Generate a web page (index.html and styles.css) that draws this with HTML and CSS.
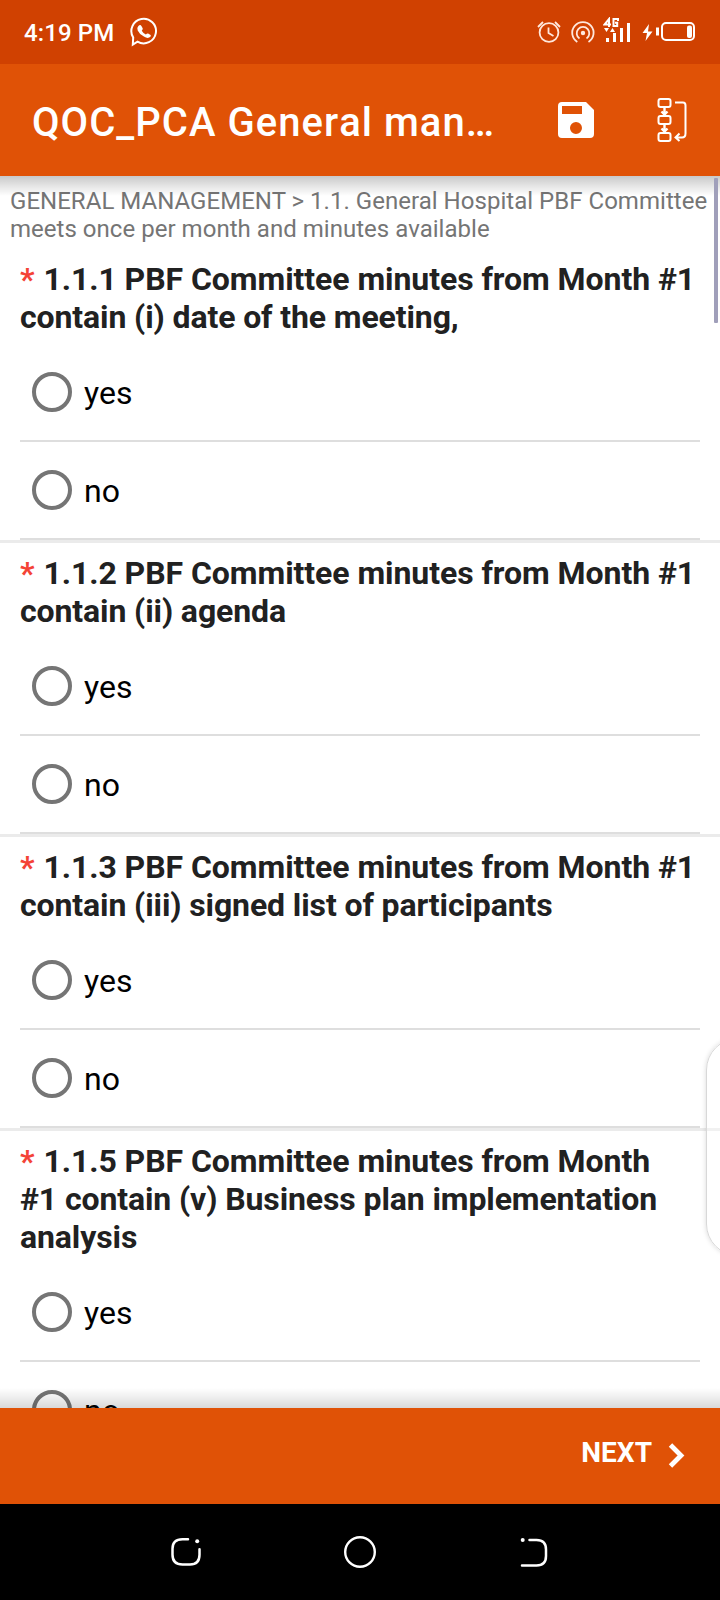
FILE: index.html
```html
<!DOCTYPE html>
<html lang="en">
<head>
<meta charset="utf-8">
<title>QOC_PCA General management</title>
<link rel="stylesheet" href="styles.css">
</head>
<body>
<div class="screen">
  <div class="status">
    <span class="time">4:19 PM</span>
    <svg class="chat" width="28" height="30" viewBox="130 17 28 30" fill="none" stroke="#fff" stroke-width="2"><path d="M133.2 37.5A12.3 12.3 0 1 1 137.500 41.700L132.800 44.600Z"/><path fill="#fff" stroke="none" d="M138.200 26.200q2-2 3.200-.3l1.300 2.400q.4 1-.9 2.400q1.400 2.600 4.100 3.900q1.100-1.500 2.200-1.100l2.500 1.400q.8.800-.5 2.200q-2.300 1.800-6.200-.5q-4.600-2.600-6.200-6.200q-1-2.600.5-4.200Z"/></svg>
    <div class="indicators">
      <svg width="26" height="26" viewBox="536 19 26 26" fill="none" stroke="#ffe7dc" stroke-width="1.800"><circle cx="549" cy="32.500" r="9.400"/><path d="M548.500 27.500v5.500l5 3M538 27l5-5M560 27l-5-5"/></svg>
      <svg width="26" height="26" viewBox="570 19 26 26" fill="none" stroke="#ffe7dc" stroke-width="1.800"><circle cx="583" cy="33" r="1.300" fill="#fff"/><path d="M577.300 41.900A10.700 10.700 0 1 1 588.500 41.900M579.500 38.500A6.300 6.300 0 1 1 586.500 38.500"/></svg>
      <svg class="signal" width="28" height="26" viewBox="603 17 28 26" fill="#fff"><path d="M606 38h3v4h-3zM613 33h3v9h-3zM620 28h3v14h-3zM627 23h3v19h-3zM604 28h5l-2.500 4zM610 32h5l-2.500-4z"/><path fill="none" stroke="#fff" stroke-width="2" d="M609 27V19L604.500 24.500H611M618 21V19H613.500V26H617.200V22.700H615"/></svg>
      <svg class="battery" width="54" height="22" viewBox="642 21 54 22"><path fill="#fff" d="M649 24l-6.500 9h4.500l-1.500 8 7-9.500h-4.500zM656 27.500h3v8h-3z"/><rect x="662" y="23" width="32" height="17" rx="4" fill="none" stroke="#fff" stroke-width="2"/><rect x="687" y="25.500" width="5" height="12.500" rx="2" fill="#fff"/></svg>
    </div>
  </div>
  <header class="appbar">
    <h1 class="title">QOC_PCA General man…</h1>
    <svg class="save" width="36" height="36" viewBox="0 0 36 36"><path fill="#fff" fill-rule="evenodd" d="M4 0H28L36 8V32a4 4 0 0 1-4 4H4a4 4 0 0 1-4-4V4a4 4 0 0 1 4-4ZM4 4V12H24V4ZM18 20a6 6 0 1 0 0 12a6 6 0 0 0 0-12Z"/></svg>
    <svg class="jump" width="32" height="46" viewBox="656 97 32 46" fill="none" stroke="#fff" stroke-width="2"><rect x="658.500" y="99" width="12" height="8" rx="2"/><rect x="658.500" y="116" width="12" height="8" rx="2"/><rect x="658.500" y="133" width="12" height="8" rx="2"/><path d="M664.500 107v7M664.500 124v7M661.500 111.500l3 3 3-3M661.500 128.500l3 3 3-3" stroke-width="2.400"/><path d="M675 102.500h8q2.500 0 2.500 3v28q0 4-3.500 4h-6.500M679.500 133.500l-4 4 4 3.500"/></svg>
  </header>
  <main class="content">
    <p class="crumb">GENERAL MANAGEMENT &gt; 1.1. General Hospital PBF Committee<br>meets once per month and minutes available</p>
    <section class="question">
      <h2 class="label"><span class="star">*</span> 1.1.1 PBF Committee minutes from Month #1<br>contain (i) date of the meeting,</h2>
      <div class="option"><i class="radio"></i><span>yes</span></div>
      <div class="option"><i class="radio"></i><span>no</span></div>
    </section>
    <section class="question">
      <h2 class="label"><span class="star">*</span> 1.1.2 PBF Committee minutes from Month #1<br>contain (ii) agenda</h2>
      <div class="option"><i class="radio"></i><span>yes</span></div>
      <div class="option"><i class="radio"></i><span>no</span></div>
    </section>
    <section class="question">
      <h2 class="label"><span class="star">*</span> 1.1.3 PBF Committee minutes from Month #1<br>contain (iii) signed list of participants</h2>
      <div class="option"><i class="radio"></i><span>yes</span></div>
      <div class="option"><i class="radio"></i><span>no</span></div>
    </section>
    <section class="question">
      <h2 class="label"><span class="star">*</span> 1.1.5 PBF Committee minutes from Month<br>#1 contain (v) Business plan implementation<br>analysis</h2>
      <div class="option"><i class="radio"></i><span>yes</span></div>
      <div class="option"><i class="radio"></i><span>no</span></div>
    </section>
    <div class="shade shade-top"></div>
    <div class="shade shade-bottom"></div>
    <div class="scrollbar"></div>
    <div class="edge-panel"></div>
  </main>
  <footer class="pager">
    <span class="next">NEXT</span>
    <svg class="chevron" width="18" height="26" viewBox="0 0 18 26" fill="none" stroke="#fff" stroke-width="4.800"><path d="M2.500 2 13 12.500 2.500 23"/></svg>
  </footer>
  <nav class="nav">
    <svg width="32" height="30" viewBox="170 1537 32 30" fill="none" stroke="#fff" stroke-width="2.500" stroke-linecap="round"><path d="M188 1539.200h-5.500q-10 0-10 9.500v6q0 9.700 10 9.700h7.500q9.500 0 9.500-9.700v-5.500"/><circle cx="197.200" cy="1541.200" r="2" fill="#fff" stroke="none"/></svg>
    <svg width="34" height="34" viewBox="0 0 34 34"><circle cx="16" cy="17" r="14.800" fill="none" stroke="#fff" stroke-width="2.400"/></svg>
    <svg width="30" height="30" viewBox="519 1537 30 30" fill="none" stroke="#fff" stroke-width="2.500" stroke-linecap="round"><path d="M529.500 1540h7q9.500 0 9.500 9.500v6.500q0 9.500-9.500 9.500h-14.500"/><circle cx="522.700" cy="1540" r="2" fill="#fff" stroke="none"/></svg>
  </nav>
</div>
</body>
</html>
```
FILE: styles.css
```css
* { box-sizing: border-box; }
body { margin: 0; font-family: Roboto, sans-serif; }
h1, h2, p { margin: 0; }
svg { display: block; flex: none; }
.screen { width: 720px; height: 1600px; display: flex; flex-direction: column; overflow: hidden; background: #fff; }
.status { height: 64px; flex: none; display: flex; align-items: center; padding: 0 24px; background: #d04101; color: #fff; }
.time { font-size: 24px; font-weight: 500; line-height: 28px; letter-spacing: 0.1px; white-space: nowrap; width: 106px; padding-top: 1px; }
.indicators { margin-left: auto; display: flex; align-items: center; }
.indicators svg + svg { margin-left: 8px; }
.indicators .signal { margin-left: 7px; margin-bottom: 4px; }
.indicators .battery { margin-left: 11px; }
.appbar { height: 112px; flex: none; display: flex; align-items: center; padding: 0 32px; background: #e05206; color: #fff; }
.title { width: 526px; font-size: 40px; font-weight: 500; line-height: 48px; letter-spacing: 1.03px; padding-top: 5px; white-space: nowrap; font-kerning: none; }
.jump { margin-left: 62px; }
.content { position: relative; height: 1232px; flex: none; overflow: hidden; }
.crumb { height: 70px; padding: 11px 10px 0; font-size: 24px; line-height: 28px; letter-spacing: 0.03px; color: #757575; white-space: nowrap; }
.question { padding: 0 20px; border-top: 3px solid #ebebeb; }
.crumb + .question { border-top-color: transparent; }
.label { padding: 11px 0 8px; font-size: 32px; font-weight: 700; line-height: 38px; letter-spacing: -0.11px; color: #212121; white-space: nowrap; }
.label::first-line { letter-spacing: -0.06px; }
.star { margin-right: 1px; color: #f44336; }
.option { height: 98px; display: flex; align-items: center; gap: 12px; padding-left: 12px; border-bottom: 2px solid #dedede; font-size: 32px; line-height: 38px; color: #000; }
.option span { padding-top: 2px; }
.radio { width: 40px; height: 40px; border: 4px solid #757575; border-radius: 50%; }
.shade { position: absolute; left: 0; right: 0; height: 20px; }
.shade-top { top: 0; background: linear-gradient(rgba(0,0,0,.21), rgba(0,0,0,.10) 50%, transparent); }
.shade-bottom { bottom: 0; background: linear-gradient(transparent, rgba(0,0,0,.07) 50%, rgba(0,0,0,.15)); }
.scrollbar { position: absolute; top: 2px; right: 2px; width: 4px; height: 145px; border-radius: 1px; background: #a09fba; }
.edge-panel { position: absolute; top: 862px; right: -26px; width: 40px; height: 218px; border-radius: 32px 0 0 32px; border: 1px solid #d8d8d8; background: rgba(255,255,255,.3); box-shadow: 0 0 5px rgba(0,0,0,.15); }
.pager { height: 96px; flex: none; display: flex; align-items: center; justify-content: flex-end; padding-right: 34px; background: #e05206; color: #fff; }
.next { font-size: 28px; font-weight: 700; line-height: 32px; padding-bottom: 6px; }
.chevron { margin-left: 16px; }
.nav { height: 96px; flex: none; display: flex; align-items: center; justify-content: space-between; padding: 0 171px 0 170px; background: #000; }
```
